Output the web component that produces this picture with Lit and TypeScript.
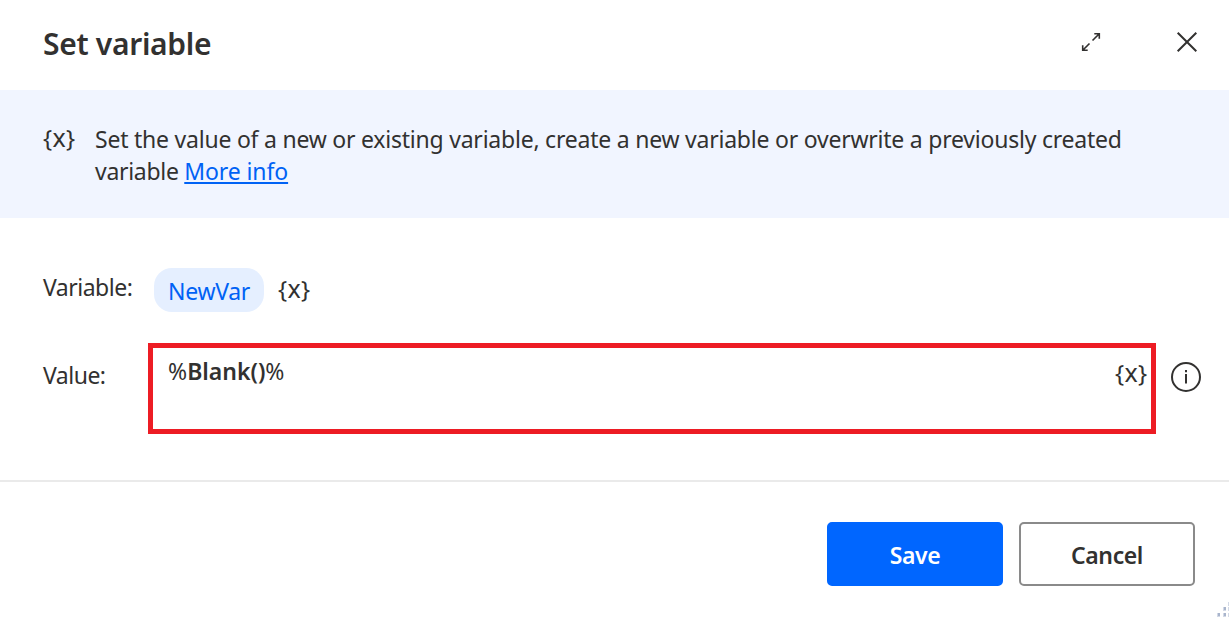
import { LitElement, html, css, svg } from "lit";
import { customElement } from "lit/decorators.js";

@customElement("variable-glyph")
class VariableGlyph extends LitElement {
  static styles = css`
    :host { display: flex; box-sizing: border-box; width: 34px; height: 30px; padding: 0 2px; justify-content: space-between; font: 400 24px/30px "Noto Sans", sans-serif; color: #323130; }
    .brace { width: 7px; display: flex; justify-content: center; line-height: 27px; }
    .x { font-size: 25px; line-height: 27px; }
  `;
  render() {
    return html`<span class="brace">{</span><span class="x">x</span><span class="brace">}</span>`;
  }
}

@customElement("app-root")
class AppRoot extends LitElement {
  static styles = css`
    :host { display: block; width: 1229px; height: 617px; overflow: hidden; background: #fff; color: #323130; font: 400 23px/32px "Noto Sans", sans-serif; }
    * { box-sizing: border-box; }
    .dialog { display: flex; flex-direction: column; height: 617px; position: relative; }
    .header { height: 90px; display: flex; align-items: flex-start; padding: 22px 31px 0 43px; }
    .title { margin: 0; flex: 1; font-size: 30px; line-height: 44px; font-weight: 600; white-space: nowrap; }
    .title span { letter-spacing: -0.3px; }
    .expand { width: 20px; height: 20px; margin: 10px 75px 0 0; }
    .close { width: 22px; height: 22px; margin-top: 9px; }
    .banner { height: 128px; background: #f1f5ff; display: flex; padding: 33px 0 0 42px; }
    .banner variable-glyph { margin: 1px 19px 0 0; }
    .copy { white-space: nowrap; }
    .line1 { letter-spacing: -0.225px; }
    .line2 { letter-spacing: -0.3px; }
    .link { color: #0062f5; letter-spacing: -0.1px; text-decoration: underline; text-decoration-thickness: 2px; text-underline-offset: 2px; }
    .fields { height: 262px; padding-top: 50px; }
    .row { display: flex; align-items: flex-start; padding-left: 43px; }
    .label { width: 111px; padding-top: 3px; white-space: nowrap; letter-spacing: -0.5px; }
    .chip { width: 110px; height: 44px; border-radius: 18px; background: #e5efff; color: #0062f5; display: flex; justify-content: center; padding-top: 7px; margin-right: 13px; letter-spacing: -0.3px; }
    .row variable-glyph { margin-top: 7px; }
    .value { margin-top: 31px; }
    .value .label { width: 105px; padding-top: 16px; }
    .box { width: 1008px; height: 91px; border: 5px solid #ed1c24; display: flex; justify-content: space-between; padding: 7px 3px 0 15px; white-space: nowrap; }
    .box variable-glyph { margin-top: 4px; }
    .strong { font-weight: 600; }
    .info { width: 32px; height: 32px; margin: 18px 0 0 14px; }
    .footer { flex: 1; border-top: 2px solid #eaeaea; display: flex; justify-content: flex-end; gap: 16px; padding: 40px 34px 0 0; }
    .button { width: 176px; height: 64px; border: 2px solid #8a8a8a; border-radius: 5px; background: #fff; color: #323130; font: 600 23px/32px "Noto Sans", sans-serif; letter-spacing: -0.4px; padding: 2px 0 0; }
    .primary { background: #0066ff; border-color: #0066ff; color: #fff; }
    .grip { position: absolute; right: 0; bottom: 0; width: 14px; height: 18px; }
  `;
  render() {
    return html`
      <div class="dialog">
        <div class="header">
          <h1 class="title"><span>Set variable</span></h1>
          <svg class="expand" viewBox="0 0 20 20" fill="none" stroke="#323130" stroke-width="1.6">
            <path d="M11.5 8.5 18.5 1.5M13.3 1.7H18.3V6.7M8.5 11.5 1.5 18.5M1.7 13.3V18.3H6.7" />
          </svg>
          <svg class="close" viewBox="0 0 22 22" fill="none" stroke="#323130" stroke-width="2">
            <path d="M1.7 1.7 20.3 20.3M20.3 1.7 1.7 20.3" />
          </svg>
        </div>
        <div class="banner">
          <variable-glyph></variable-glyph>
          <div class="copy">
            <div class="line1">Set the value of a new or existing variable, create a new variable or overwrite a previously created</div>
            <div class="line2">variable <span class="link">More info</span></div>
          </div>
        </div>
        <div class="fields">
          <div class="row">
            <div class="label">Variable:</div>
            <div class="chip"><span>NewVar</span></div>
            <variable-glyph></variable-glyph>
          </div>
          <div class="row value">
            <div class="label">Value:</div>
            <div class="box">
              <span>%<span class="strong">Blank()</span>%</span>
              <variable-glyph></variable-glyph>
            </div>
            <svg class="info" viewBox="0 0 32 32" fill="none" stroke="#323130" stroke-width="2">
              <circle cx="16" cy="16" r="14" />
              <path d="M16 13V22.5M16 9V11.2" />
            </svg>
          </div>
        </div>
        <div class="footer">
          <button class="button primary">Save</button>
          <button class="button">Cancel</button>
        </div>
        <svg class="grip" viewBox="0 0 14 18" shape-rendering="crispEdges">
          ${[[2, 14], [8, 14], [8, 8], [13, 14], [13, 8], [13, 3]].map(
            ([x, y]) => svg`<rect x=${x} y=${y} width="3" height="4" fill="#d3d9e6"/><rect x=${x + 1} y=${y} width="2" height="3" fill="#a9b5cc"/>`
          )}
        </svg>
      </div>
    `;
  }
}
